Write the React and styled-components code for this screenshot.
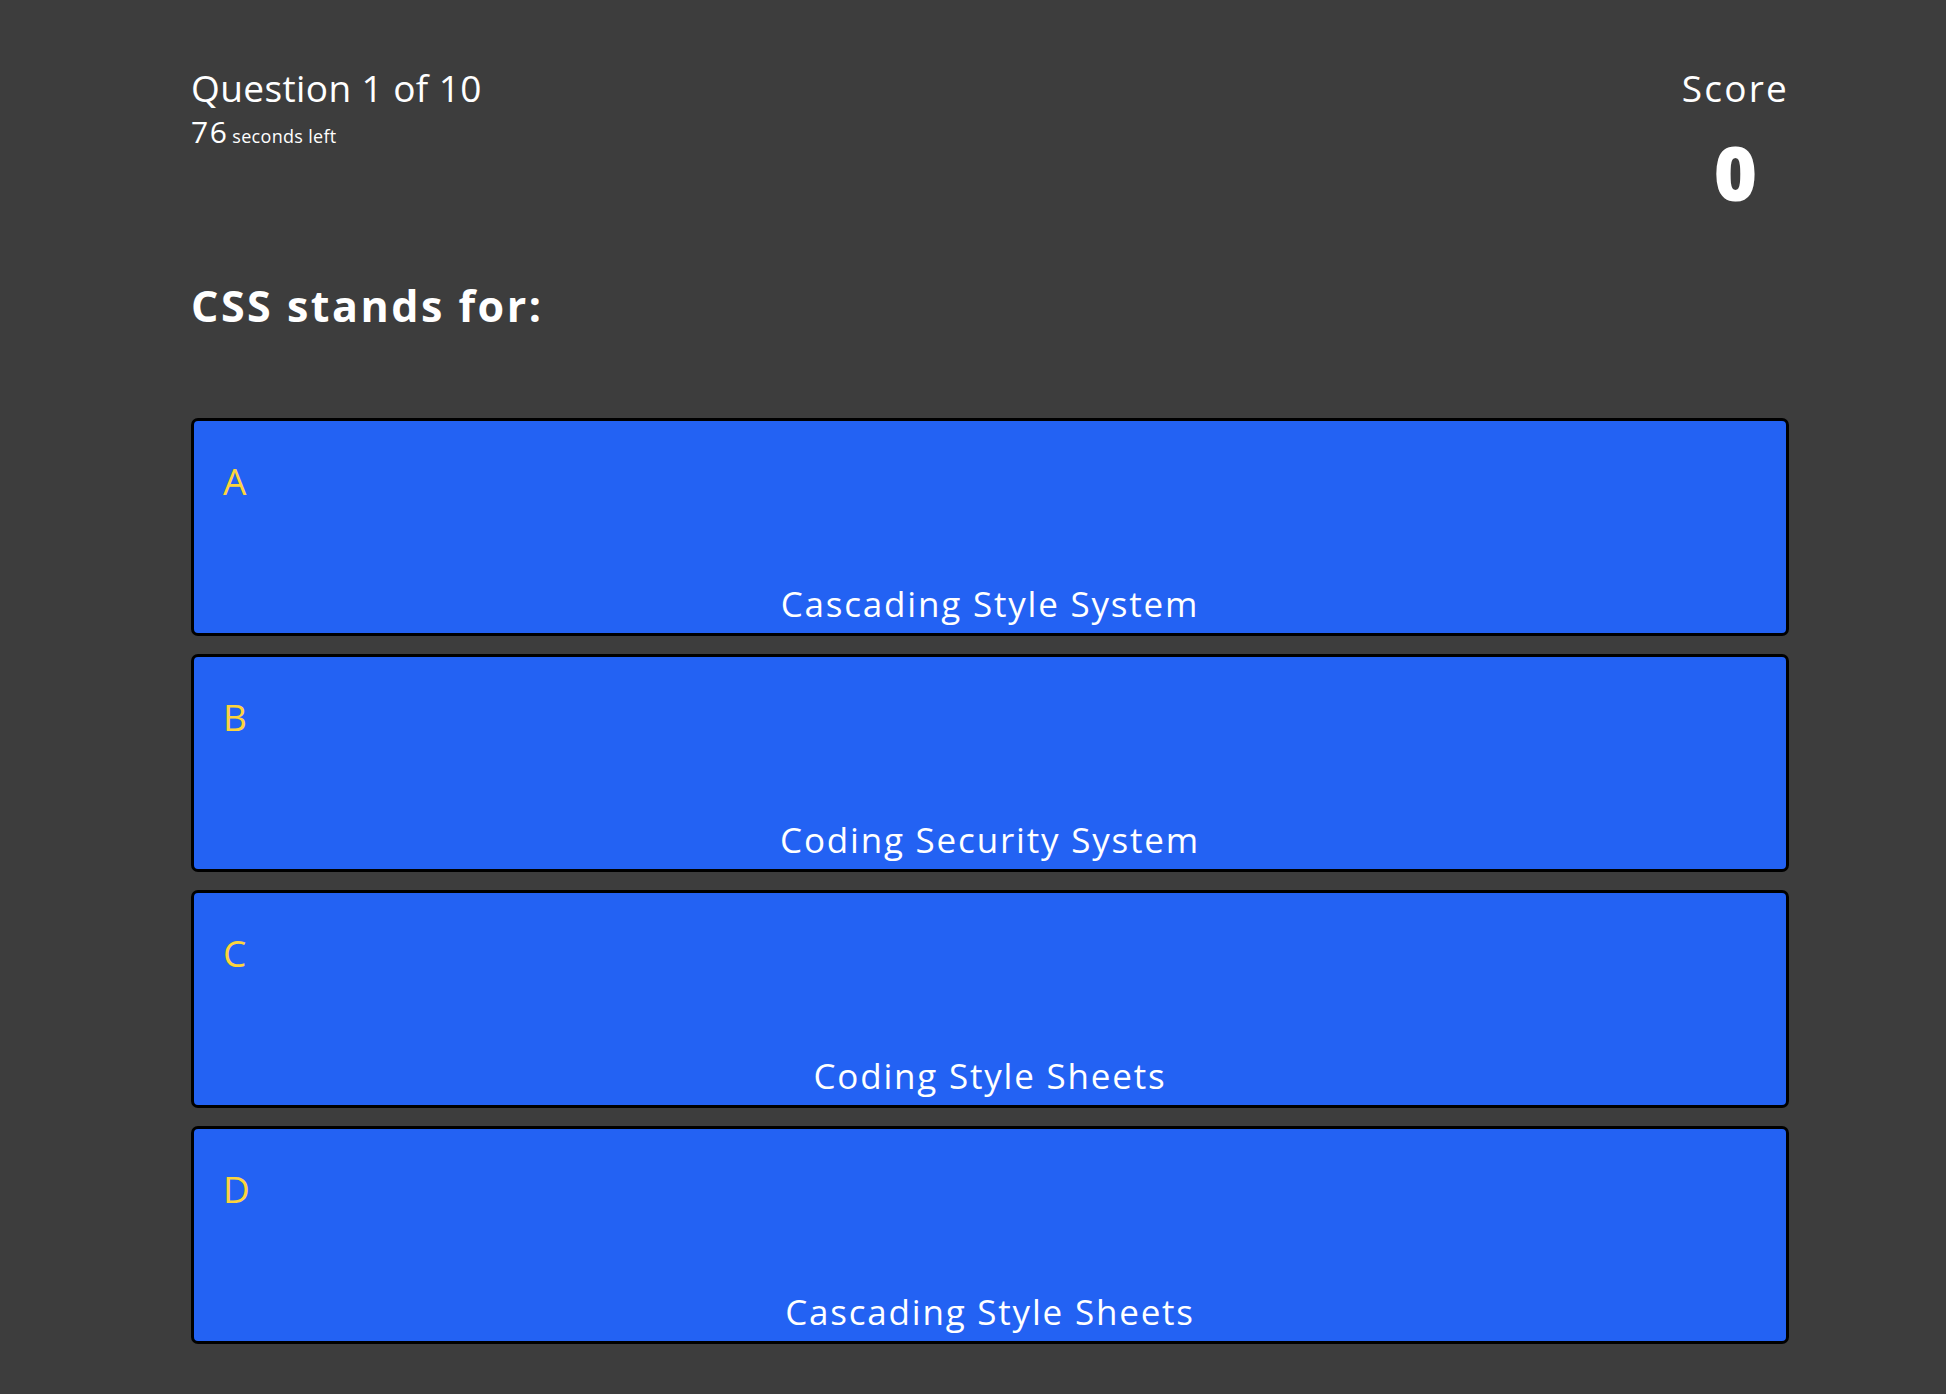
import React from "react";
import styled, { createGlobalStyle } from "styled-components";

const GlobalStyle = createGlobalStyle`
  body {
    margin: 0;
    background-color: #3d3d3d;
    font-family: "Open Sans", Lato, sans-serif;
    color: #ffffff;
  }
`;

const answers = [
  { letter: "A", text: "Cascading Style System" },
  { letter: "B", text: "Coding Security System" },
  { letter: "C", text: "Coding Style Sheets" },
  { letter: "D", text: "Cascading Style Sheets" },
];

const App = () => {
  return (
    <>
      <GlobalStyle />
      <Page>
        <Header>
          <div>
            <Counter>Question 1 of 10</Counter>
            <Timer>
              <Seconds>76</Seconds>
              <SecondsLabel>seconds left</SecondsLabel>
            </Timer>
          </div>
          <ScoreBox>
            <ScoreLabel>Score</ScoreLabel>
            <ScoreValue>0</ScoreValue>
          </ScoreBox>
        </Header>

        <Question>CSS stands for:</Question>

        <AnswerList>
          {answers.map((a) => (
            <Answer key={a.letter}>
              <Letter>{a.letter}</Letter>
              <AnswerText>{a.text}</AnswerText>
            </Answer>
          ))}
        </AnswerList>
      </Page>
    </>
  );
};

export default App;

const Page = styled.div`
  min-height: 100vh;
  box-sizing: border-box;
  padding: 66px 157px 48px 191px;
`;

const Header = styled.div`
  display: flex;
  justify-content: space-between;
  align-items: flex-start;
`;

const Counter = styled.div`
  font-size: 37px;
  line-height: 1.2;
  letter-spacing: 0.4px;
`;

const Timer = styled.div`
  display: flex;
  align-items: baseline;
  margin-top: 4px;
  line-height: 1.2;
`;

const Seconds = styled.span`
  font-size: 30px;
  letter-spacing: 1.5px;
`;

const SecondsLabel = styled.span`
  font-size: 18px;
  margin-left: 4px;
  letter-spacing: 0.3px;
`;

const ScoreBox = styled.div`
  text-align: center;
`;

const ScoreLabel = styled.div`
  font-size: 37px;
  line-height: 1.2;
  letter-spacing: 2.2px;
`;

const ScoreValue = styled.div`
  font-size: 74px;
  font-weight: 800;
  line-height: 1;
  margin-top: 26px;
`;

const Question = styled.h1`
  margin: 70px 0 86px;
  font-size: 43px;
  font-weight: 700;
  line-height: 1.2;
  letter-spacing: 2.5px;
`;

const AnswerList = styled.div`
  display: flex;
  flex-direction: column;
  gap: 18px;
`;

const Answer = styled.div`
  height: 218px;
  box-sizing: border-box;
  display: flex;
  flex-direction: column;
  padding: 38px 29px 8px;
  background-color: #2362f3;
  border: 3px solid #000000;
  border-radius: 7px;
  cursor: pointer;
`;

const Letter = styled.div`
  font-size: 37px;
  line-height: 1.2;
  color: #fdd43c;
`;

const AnswerText = styled.div`
  margin-top: auto;
  text-align: center;
  font-size: 35px;
  line-height: 1.2;
  letter-spacing: 1.8px;
`;
